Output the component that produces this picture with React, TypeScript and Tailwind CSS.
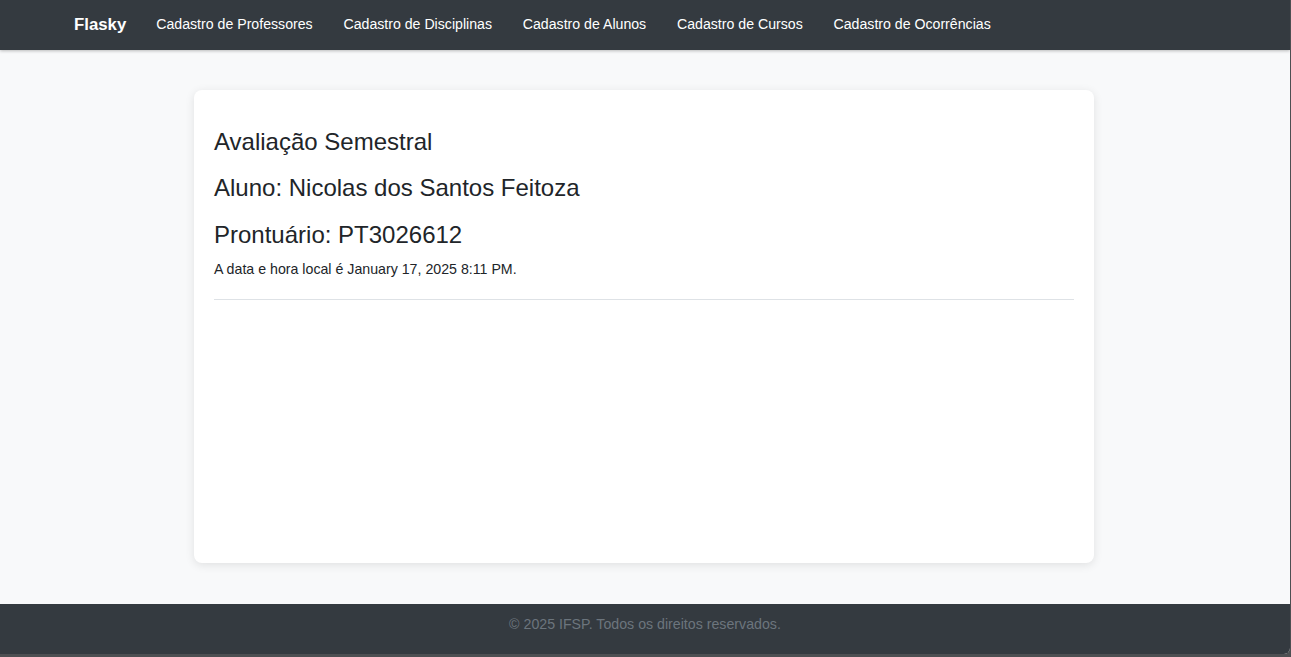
export default function App() {
  const links = [
    "Cadastro de Professores",
    "Cadastro de Disciplinas",
    "Cadastro de Alunos",
    "Cadastro de Cursos",
    "Cadastro de Ocorrências",
  ];
  return (
    <div className="w-[1291px] h-[657px] bg-[#4d4f52] overflow-hidden" style={{ fontFamily: '"Liberation Sans", Arial, sans-serif' }}>
      <div className="w-[1290px] h-[654px] flex flex-col bg-[#f8f9fa] rounded-br-[6px] overflow-hidden">
        <nav className="h-[50px] shrink-0 bg-[#343a40] flex items-center pl-[74px] shadow-[0_1px_3px_rgba(0,0,0,0.25)] relative z-10">
          <span className="text-white font-bold text-[16.8px] mr-[14.6px]">Flasky</span>
          {links.map((l) => (
            <span key={l} className="text-white text-[14.15px] px-[15.4px]">{l}</span>
          ))}
        </nav>
        <main className="flex-1 flex justify-start pl-[194px] pt-[40px] pb-[41px]">
          <div className="w-[900px] bg-white rounded-[8px] shadow-[0_2px_10px_rgba(0,0,0,0.1)] px-[20px] pt-[38px]">
            <h4 className="text-[24px] leading-[28.8px] text-[#212529] mb-[17.7px]">Avaliação Semestral</h4>
            <h4 className="text-[24px] leading-[28.8px] text-[#212529] mb-[17.7px]">Aluno: Nicolas dos Santos Feitoza</h4>
            <h4 className="text-[24px] leading-[28.8px] text-[#212529] mb-[9px]">Prontuário: PT3026612</h4>
            <p className="text-[14.2px] leading-[21px] text-[#212529]">A data e hora local é January 17, 2025 8:11 PM.</p>
            <hr className="mt-[19px] border-t border-[#dee2e6]" />
          </div>
        </main>
        <footer className="h-[50px] shrink-0 bg-[#343a40] flex justify-center pt-[10px]">
          <span className="text-[#6c757d] text-[14.2px] leading-[21px]">© 2025 IFSP. Todos os direitos reservados.</span>
        </footer>
      </div>
    </div>
  );
}
